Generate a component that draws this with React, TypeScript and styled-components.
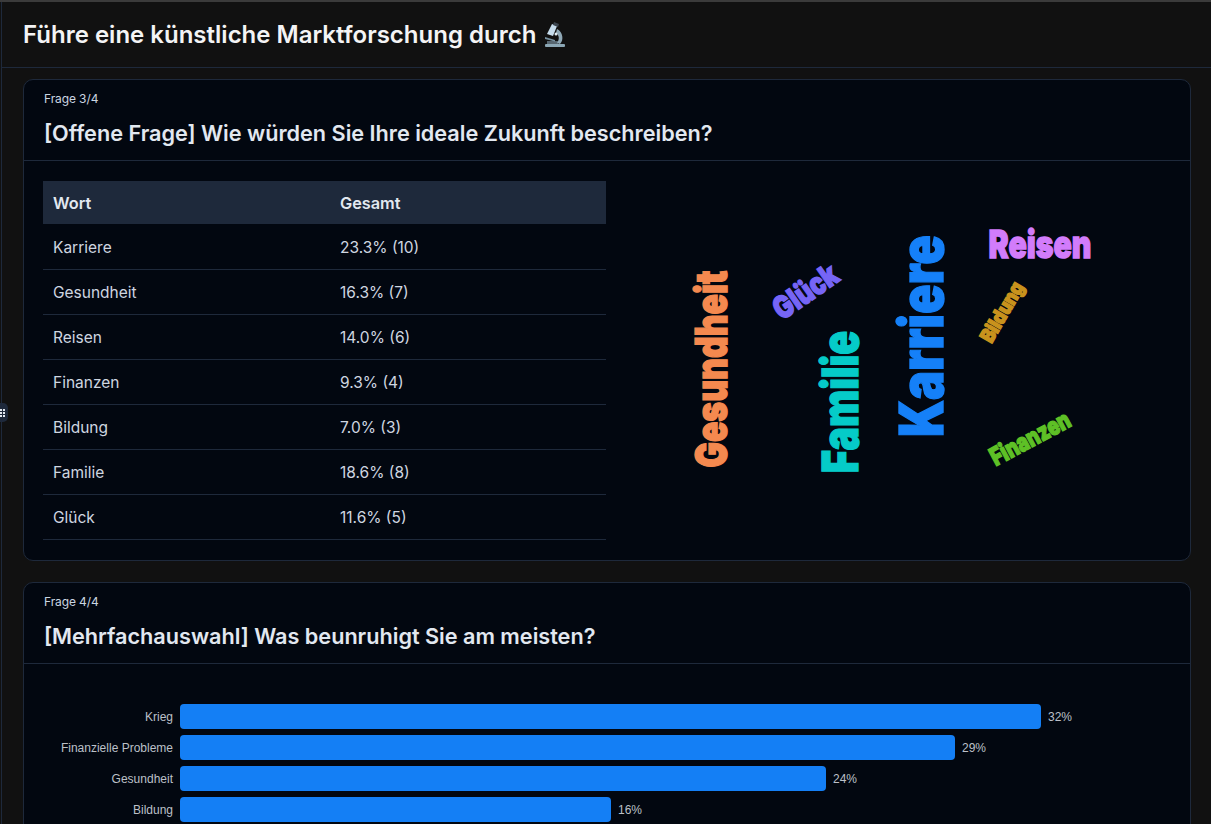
import React from "react";
import styled, { createGlobalStyle } from "styled-components";

const GlobalStyle = createGlobalStyle`
  html, body {
    margin: 0;
    padding: 0;
    background: #111111;
    font-family: Inter, "Noto Sans", sans-serif;
    overflow: hidden;
  }
`;

const Page = styled.div`
  position: relative;
  height: 824px;
  overflow: hidden;
  box-sizing: border-box;
  border-top: 2px solid #3b3b3b;
  background: #111111;
  color: #f8fafc;
`;

const Shell = styled.div`
  margin-left: 1px;
  border-left: 1px solid #1e293b;
  height: 100%;
`;

const Header = styled.header`
  height: 66px;
  box-sizing: border-box;
  display: flex;
  align-items: center;
  gap: 8px;
  padding-left: 21px;
  border-bottom: 1px solid #1e293b;
`;

const Title = styled.h1`
  margin: 0;
  font-size: 24px;
  font-weight: 600;
  color: #f4f4f5;
`;

const Main = styled.main`
  display: flex;
  flex-direction: column;
  gap: 21px;
  padding: 11px 20px 0 21px;
`;

const Card = styled.section`
  flex: none;
  border: 1px solid #1e293b;
  border-radius: 10px;
  background: #020710;
`;

const CardHead = styled.div`
  height: 81px;
  box-sizing: border-box;
  padding: 11px 20px 0 20px;
  border-bottom: 1px solid #1e293b;
`;

const Step = styled.div`
  font-size: 12px;
  line-height: 16px;
  letter-spacing: -0.1px;
  color: #cbd5e1;
`;

const Question = styled.h2`
  margin: 12px 0 0;
  font-size: 21.65px;
  line-height: 28px;
  font-weight: 600;
  color: #e2e8f0;
`;

const SplitBody = styled.div`
  display: grid;
  grid-template-columns: 563px 1fr;
  padding: 20px 0 20px 19px;
`;

const Table = styled.table`
  width: 563px;
  border-collapse: collapse;
  table-layout: fixed;
`;

const HeadCell = styled.th`
  height: 43px;
  padding: 1px 10px 0;
  box-sizing: border-box;
  background: #1e293b;
  font-size: 16.3px;
  font-weight: 600;
  text-align: left;
  color: #e2e8f0;

  &:first-child {
    width: 287px;
  }
`;

const Cell = styled.td`
  height: 45px;
  padding: 2px 10px 0;
  box-sizing: border-box;
  font-size: 15.5px;
  color: #cfd6e0;
  border-bottom: 1px solid #1e293b;
`;

const Cloud = styled.svg`
  display: block;
  width: 584px;
  height: 358px;
`;

const CloudWord = styled.text<{ $color: string }>`
  font-family: Inter, "Liberation Sans", sans-serif;
  font-weight: 900;
  fill: ${(p) => p.$color};
  stroke: ${(p) => p.$color};
  stroke-width: 1.4px;
`;

const ChartBody = styled.div`
  display: flex;
  flex-direction: column;
  gap: 6px;
  padding: 40px 0 40px 19px;
`;

const BarRow = styled.div`
  display: flex;
  align-items: center;
  height: 25px;
`;

const BarLabel = styled.div`
  width: 130px;
  margin-right: 7px;
  padding-top: 1px;
  flex: none;
  text-align: right;
  font-family: "Liberation Sans", Arial, sans-serif;
  font-size: 12px;
  color: #bcc0c8;
  white-space: nowrap;
`;

const Bar = styled.div`
  height: 25px;
  border-radius: 4px;
  background: #147ff5;
`;

const BarValue = styled.div`
  margin-left: 7px;
  padding-top: 1px;
  font-family: "Liberation Sans", Arial, sans-serif;
  font-size: 12px;
  color: #bcc0c8;
`;

const Handle = styled.div`
  position: absolute;
  left: 0;
  top: 401px;
  width: 8px;
  height: 19px;
  border-radius: 0 5px 5px 0;
  background: #1e293b;
  display: grid;
  grid-template-columns: 2px 2px;
  grid-auto-rows: 2px;
  gap: 1px;
  align-content: center;
  box-sizing: border-box;
`;

const Dot = styled.span`
  background: #e2e8f0;
`;

const rows = [
  ["Karriere", "23.3% (10)"],
  ["Gesundheit", "16.3% (7)"],
  ["Reisen", "14.0% (6)"],
  ["Finanzen", "9.3% (4)"],
  ["Bildung", "7.0% (3)"],
  ["Familie", "18.6% (8)"],
  ["Glück", "11.6% (5)"],
];

// x/y are the middle of the word, relative to the cloud's top-left corner
const words = [
  { text: "Karriere", color: "#1580f8", size: 60, length: 202, x: 315, y: 155, angle: -90 },
  { text: "Gesundheit", color: "#f4894f", size: 44, length: 197, x: 105, y: 188, angle: -90 },
  { text: "Familie", color: "#05cbc8", size: 50, length: 142, x: 234, y: 221, angle: -90 },
  { text: "Reisen", color: "#d27cfb", size: 38, length: 103, x: 434, y: 63, angle: 0 },
  { text: "Glück", color: "#7665f6", size: 31, length: 72, x: 199, y: 110, angle: -35 },
  { text: "Bildung", color: "#c8921d", size: 20, length: 66, x: 396, y: 131, angle: -60 },
  { text: "Finanzen", color: "#5ec026", size: 25, length: 87, x: 424, y: 257, angle: -28 },
];

const bars = [
  { label: "Krieg", value: "32%", width: 861 },
  { label: "Finanzielle Probleme", value: "29%", width: 775 },
  { label: "Gesundheit", value: "24%", width: 646 },
  { label: "Bildung", value: "16%", width: 431 },
];

const Microscope = () => (
  <svg width="21" height="26" viewBox="0 0 21 26">
    <rect x="1" y="22" width="20" height="3" rx="1" fill="#8ba6b4" />
    <path d="M3 19h11v3H3z" fill="#56656f" />
    <path d="M13 7c6 3 7 11 3 15l-3-1c3-4 2-8-1-10z" fill="#8fa8b6" />
    <path d="M8 2l5 2-4 10-6-2z" fill="#c6dcec" />
    <path d="M10 0l5 2-1 3-5-2z" fill="#3c4650" />
    <path d="M1 15l10 3v1.5L1 17z" fill="#76909f" />
    <circle cx="12" cy="12" r="1.5" fill="#e2eef5" />
  </svg>
);

export default function App() {
  return (
    <Page>
      <GlobalStyle />
      <Shell>
        <Header>
          <Title>Führe eine künstliche Marktforschung durch</Title>
          <Microscope />
        </Header>
        <Main>
          <Card>
            <CardHead>
              <Step>Frage 3/4</Step>
              <Question>[Offene Frage] Wie würden Sie Ihre ideale Zukunft beschreiben?</Question>
            </CardHead>
            <SplitBody>
              <Table>
                <thead>
                  <tr>
                    <HeadCell>Wort</HeadCell>
                    <HeadCell>Gesamt</HeadCell>
                  </tr>
                </thead>
                <tbody>
                  {rows.map(([word, total]) => (
                    <tr key={word}>
                      <Cell>{word}</Cell>
                      <Cell>{total}</Cell>
                    </tr>
                  ))}
                </tbody>
              </Table>
              <Cloud viewBox="0 0 584 358">
                {words.map((w) => (
                  <CloudWord
                    key={w.text}
                    $color={w.color}
                    fontSize={w.size}
                    textAnchor="middle"
                    dominantBaseline="central"
                    textLength={w.length}
                    lengthAdjust="spacingAndGlyphs"
                    transform={`translate(${w.x} ${w.y}) rotate(${w.angle})`}
                  >
                    {w.text}
                  </CloudWord>
                ))}
              </Cloud>
            </SplitBody>
          </Card>
          <Card>
            <CardHead>
              <Step>Frage 4/4</Step>
              <Question>[Mehrfachauswahl] Was beunruhigt Sie am meisten?</Question>
            </CardHead>
            <ChartBody>
              {bars.map((b) => (
                <BarRow key={b.label}>
                  <BarLabel>{b.label}</BarLabel>
                  <Bar style={{ width: b.width }} />
                  <BarValue>{b.value}</BarValue>
                </BarRow>
              ))}
            </ChartBody>
          </Card>
        </Main>
      </Shell>
      <Handle>
        {Array.from({ length: 6 }, (_, i) => (
          <Dot key={i} />
        ))}
      </Handle>
    </Page>
  );
}
